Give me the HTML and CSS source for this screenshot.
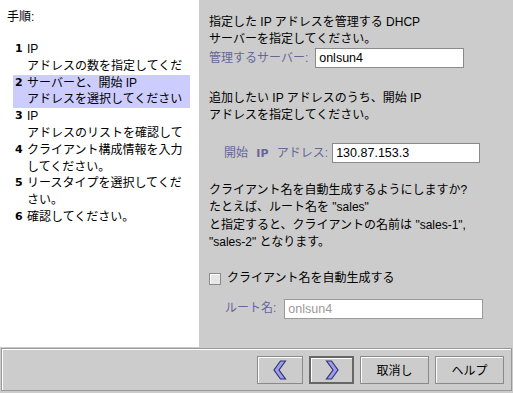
FILE: index.html
```html
<!DOCTYPE html>
<html lang="ja">
<head>
  <meta charset="utf-8">
  <title>DHCP アドレスウィザード</title>
  <link rel="stylesheet" href="styles.css">
</head>
<body>
  <div class="main">
    <div class="steps">
      <div class="steps-title">手順:</div>
      <ol class="step-list">
        <li><b>1</b><span>IP<br>アドレスの数を指定してくだ</span></li>
        <li class="current"><b>2</b><span>サーバーと、開始 IP<br>アドレスを選択してください</span></li>
        <li><b>3</b><span>IP<br>アドレスのリストを確認して</span></li>
        <li><b>4</b><span>クライアント構成情報を入力<br>してください。</span></li>
        <li><b>5</b><span>リースタイプを選択してくだ<br>さい。</span></li>
        <li><b>6</b><span>確認してください。</span></li>
      </ol>
    </div>

    <div class="panel">
      <p class="intro">指定した IP アドレスを管理する DHCP<br>サーバーを指定してください。</p>
      <div class="field server-row">
        <label class="lbl">管理するサーバー:</label>
        <div class="input server">onlsun4</div>
      </div>

      <p class="para2">追加したい IP アドレスのうち、開始 IP<br>アドレスを指定してください。</p>
      <div class="field start">
        <label class="lbl">開始 <b>IP</b> アドレス:</label>
        <div class="input ip">130.87.153.3</div>
      </div>

      <p class="para3">クライアント名を自動生成するようにしますか?<br>たとえば、ルート名を "sales"<br>と指定すると、クライアントの名前は "sales-1",<br>"sales-2" となります。</p>

      <div class="check-row">
        <span class="checkbox"></span>
        <span>クライアント名を自動生成する</span>
      </div>
      <div class="field root">
        <label class="lbl">ルート名:</label>
        <div class="input disabled">onlsun4</div>
      </div>
    </div>
  </div>

  <div class="footer">
    <button class="btn arrow" title="戻る">
      <svg width="14" height="20" viewBox="0 0 14 20"><path d="M12.5 1 L6 10 L12.5 19 L7.5 19 L1 10 L7.5 1 Z" fill="#9c9cf2" stroke="#33336b" stroke-width="1.2" stroke-linejoin="miter"/></svg>
    </button>
    <button class="btn arrow default" title="次へ">
      <svg width="14" height="20" viewBox="0 0 14 20"><path d="M1.5 1 L8 10 L1.5 19 L6.5 19 L13 10 L6.5 1 Z" fill="#9c9cf2" stroke="#33336b" stroke-width="1.2" stroke-linejoin="miter"/></svg>
    </button>
    <button class="btn text">取消し</button>
    <button class="btn text">ヘルプ</button>
  </div>
</body>
</html>
```

FILE: styles.css
```css
/* --- page --- */
*{box-sizing:border-box}
body{margin:0;width:513px;height:393px;background:#cccccc;color:#000;font-family:"Liberation Sans","Noto Sans CJK JP",sans-serif;font-size:12px;overflow:hidden}
.main{display:flex;height:347px}

/* --- steps column --- */
.steps{width:199px;background:#fff;padding:9px 0 0 7px}
.steps-title{line-height:17px}
.step-list{list-style:none;margin:15px 0 0 6px;padding:0;width:177px;line-height:16.8px}
.step-list li{display:flex;padding-left:2px;white-space:nowrap}
.step-list li b{width:12px;flex:none;font-family:"DejaVu Sans",sans-serif;font-size:11px}
.step-list li.current{background:#ccccff}

/* --- right panel --- */
.panel{flex:1;padding:14px 0 0 10px;line-height:17px}
.panel p{margin:0}
.field{display:flex;align-items:center;height:20px}
.lbl{color:#666699;margin-right:4px}
.lbl b{font-family:"DejaVu Sans",sans-serif;font-size:11px}
.input{height:20px;background:#fff;border:1px solid #8a8a8a;padding:0 3px;line-height:18px;font-size:12.5px}
.server-row .lbl{margin-right:7px}
.server{width:149px}
.para2{margin-top:22px !important}
.start{margin-top:19px;padding-left:15px}
.start .lbl{margin-right:4px;word-spacing:5px}
.ip{width:148px}
.para3{margin-top:19px !important;line-height:17.4px}
.check-row{display:flex;align-items:center;height:16px;margin-top:19px}
.checkbox{width:12px;height:12px;border:1px solid #8a8a8a;background:#e6e6e6;box-shadow:inset 1px 1px #fff;margin-right:6px}
.root{margin-top:12px;padding-left:16px}
.root .lbl{margin-right:8px}
.disabled{width:199px;color:#9a9a9a;border-color:#9a9a9a}

/* --- footer buttons --- */
.footer{height:43px;margin:1px 1px 2px 1px;border:1px solid #999;box-shadow:inset 1px 1px #fff;display:flex;align-items:center;justify-content:flex-end;gap:6px;padding-right:7px}
.btn{height:28px;background:#cccccc;border:1px solid #8a8a8a;box-shadow:inset 1px 1px #fff;font-family:"Liberation Sans","Noto Sans CJK JP",sans-serif;font-size:12px;color:#000;padding:0;display:flex;align-items:center;justify-content:center}
.arrow{width:46px}
.arrow.default{border:2px solid #666;width:45px}
.text{width:69px}
```
